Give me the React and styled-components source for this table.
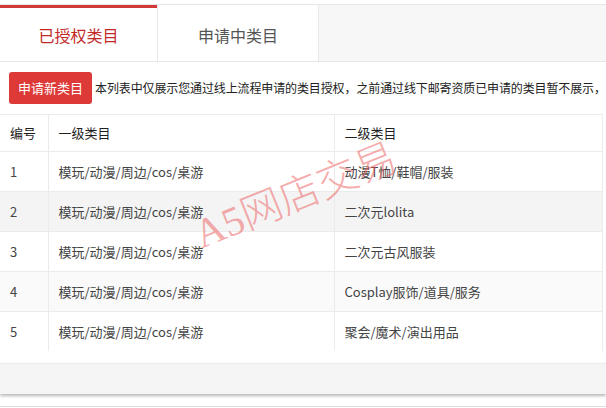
import React from "react";
import styled, { createGlobalStyle } from "styled-components";

const GlobalStyle = createGlobalStyle`
  html, body {
    margin: 0;
    padding: 0;
    background: #fff;
  }
  body {
    font-family: "Noto Sans CJK SC", "Microsoft YaHei", sans-serif;
    color: #333;
    overflow: hidden;
  }
`;

const Page = styled.div`
  position: relative;
  width: 606px;
  height: 408px;
  padding-top: 4px;
  box-sizing: border-box;
  overflow: hidden;
`;

const TabBar = styled.div`
  display: flex;
  height: 56px;
  background: #f7f7f7;
  border-top: 1px solid #e6e6e6;
  border-bottom: 1px solid #e6e6e6;
`;

const Tab = styled.div`
  position: relative;
  display: flex;
  align-items: center;
  justify-content: center;
  width: ${p => p.width}px;
  background: #fff;
  border-right: 1px solid #e8e8e8;
  font-size: 16px;
  line-height: 20px;
  padding-top: 4px;
  box-sizing: border-box;
  color: ${p => (p.active ? "#c22a2a" : "#555")};

  &::before {
    content: "";
    position: absolute;
    left: 0;
    right: 0;
    top: 0;
    height: 3px;
    background: ${p => (p.active ? "#d23a3a" : "transparent")};
  }
`;

const Toolbar = styled.div`
  display: flex;
  align-items: center;
  gap: 3px;
  padding: 10px 0 0 9px;
  height: 32px;
  white-space: nowrap;
`;

const Button = styled.button`
  flex: none;
  height: 32px;
  padding: 0 9px;
  border: none;
  border-radius: 3px;
  background: #dd3a37;
  color: #fff;
  font-family: inherit;
  font-size: 13px;
  line-height: 32px;
  cursor: pointer;
`;

const Notice = styled.span`
  font-size: 12px;
  line-height: 16px;
  letter-spacing: -0.12px;
  color: #222;
`;

const Table = styled.table`
  margin-top: 10px;
  width: 603px;
  border-collapse: collapse;
  border-top: 1px solid #ebebeb;
  border-right: 1px solid #ebebeb;
  font-size: 13px;
  line-height: 18px;
`;

const HeadCell = styled.th`
  height: 37px;
  padding: 0 0 0 10px;
  text-align: left;
  font-weight: normal;
  color: #1e1e1e;
  border-bottom: 1px solid #ebebeb;
  border-left: ${p => (p.first ? "none" : "1px solid #ebebeb")};
  width: ${p => (p.w ? `${p.w}px` : "auto")};
  box-sizing: border-box;
`;

const Row = styled.tr`
  background: ${p => p.bg};
`;

const Cell = styled.td`
  height: 39px;
  padding: 0 0 0 10px;
  color: #444;
  border-bottom: ${p => (p.last ? "none" : "1px solid #ebebeb")};
  border-left: ${p => (p.first ? "none" : "1px solid #ebebeb")};
`;

const Footer = styled.div`
  margin-top: 12px;
  height: 30px;
  background: #f5f5f5;
  border-top: 1px solid #ececec;
  box-shadow: 0 2px 3px rgba(0, 0, 0, 0.28);
`;

const FooterEdge = styled.div`
  margin-top: 12px;
  border-top: 1px solid #dcdcdc;
`;

const Watermark = styled.div`
  position: absolute;
  left: 188px;
  top: 170px;
  width: 218px;
  height: 50px;
  line-height: 50px;
  font-family: "Liberation Serif", "Noto Sans CJK SC", serif;
  font-weight: 300;
  font-size: 41px;
  color: rgba(236, 90, 90, 0.5);
  white-space: nowrap;
  transform: rotate(-22deg);
  transform-origin: center;
  pointer-events: none;
`;

const rows = [
  { id: 1, first: "模玩/动漫/周边/cos/桌游", second: "动漫T恤/鞋帽/服装", bg: "#fff" },
  { id: 2, first: "模玩/动漫/周边/cos/桌游", second: "二次元lolita", bg: "#f4f4f4" },
  { id: 3, first: "模玩/动漫/周边/cos/桌游", second: "二次元古风服装", bg: "#fff" },
  { id: 4, first: "模玩/动漫/周边/cos/桌游", second: "Cosplay服饰/道具/服务", bg: "#fafafa" },
  { id: 5, first: "模玩/动漫/周边/cos/桌游", second: "聚会/魔术/演出用品", bg: "#fff" },
];

export default function App() {
  return (
    <Page>
      <GlobalStyle />
      <TabBar>
        <Tab active width={158}>已授权类目</Tab>
        <Tab width={161}>申请中类目</Tab>
      </TabBar>

      <Toolbar>
        <Button>申请新类目</Button>
        <Notice>
          本列表中仅展示您通过线上流程申请的类目授权，之前通过线下邮寄资质已申请的类目暂不展示，
        </Notice>
      </Toolbar>

      <Table>
        <thead>
          <tr>
            <HeadCell first w={48}>编号</HeadCell>
            <HeadCell w={286}>一级类目</HeadCell>
            <HeadCell>二级类目</HeadCell>
          </tr>
        </thead>
        <tbody>
          {rows.map((r, i) => (
            <Row key={r.id} bg={r.bg}>
              <Cell first last={i === rows.length - 1}>{r.id}</Cell>
              <Cell last={i === rows.length - 1}>{r.first}</Cell>
              <Cell last={i === rows.length - 1}>{r.second}</Cell>
            </Row>
          ))}
        </tbody>
      </Table>

      <Footer />
      <FooterEdge />

      <Watermark>A5网店交易</Watermark>
    </Page>
  );
}
